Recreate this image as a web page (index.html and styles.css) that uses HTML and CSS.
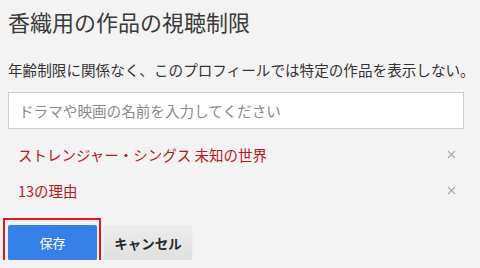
FILE: index.html
```html
<!DOCTYPE html>
<html lang="ja">
<head>
  <meta charset="UTF-8" />
  <meta name="viewport" content="width=device-width, initial-scale=1.0"/>
  <title>視聴制限</title>
  <link rel="stylesheet" href="styles.css">
</head>
<body>
  <div class="page">
    <h1 class="title">香織用の作品の視聴制限</h1>
    <p class="desc">年齢制限に関係なく、このプロフィールでは特定の作品を表示しない。</p>
    <input class="search" type="text" placeholder="ドラマや映画の名前を入力してください" />

    <ul class="blocked">
      <li>
        <span>ストレンジャー・シングス 未知の世界</span>
        <button class="remove" aria-label="削除">
          <svg width="9" height="9" viewBox="0 0 9 9"><path d="M1 1L8 8M8 1L1 8" stroke="#a8a8a8" stroke-width="1.1"/></svg>
        </button>
      </li>
      <li>
        <span>13の理由</span>
        <button class="remove" aria-label="削除">
          <svg width="9" height="9" viewBox="0 0 9 9"><path d="M1 1L8 8M8 1L1 8" stroke="#a8a8a8" stroke-width="1.1"/></svg>
        </button>
      </li>
    </ul>

    <div class="actions">
      <div class="save-wrap">
        <button class="btn btn-save">保存</button>
        <span class="highlight"></span>
      </div>
      <button class="btn btn-cancel">キャンセル</button>
    </div>
  </div>
</body>
</html>
```

FILE: styles.css
```css
body {
  margin: 0;
  background: #f3f3f3;
  font-family: "Noto Sans CJK JP", "Noto Sans", sans-serif;
  color: #333;
  overflow: hidden;
}

.page {
  padding: 8px 16px 0 8px;
}

.title {
  margin: 0;
  font-size: 22px;
  line-height: 26px;
  font-weight: normal;
  color: #3a3a3a;
}

.desc {
  margin: 26px 0 0;
  font-size: 14.6px;
  line-height: 20px;
  color: #333;
  white-space: nowrap;
}

.search {
  display: block;
  box-sizing: border-box;
  margin-top: 12px;
  width: 456px;
  height: 37px;
  padding: 0 10px;
  border: 1px solid #cfcfcf;
  background: #fff;
  font-family: inherit;
  font-size: 14.6px;
  color: #333;
  outline: none;
}

.search::placeholder {
  color: #8a8a8a;
}

.blocked {
  list-style: none;
  margin: 7px 0 0;
  padding: 0;
  width: 456px;
}

.blocked li {
  display: flex;
  align-items: center;
  justify-content: space-between;
  height: 36px;
  padding: 0 8px 0 10px;
  font-size: 14.5px;
  color: #b8191c;
}

.remove {
  border: none;
  background: none;
  padding: 0;
  display: flex;
  cursor: pointer;
}

.actions {
  display: flex;
  gap: 7px;
  margin-top: 17px;
}

.save-wrap {
  position: relative;
}

.btn {
  height: 35px;
  border: none;
  border-radius: 2px;
  font-family: inherit;
  font-size: 13px;
  cursor: pointer;
}

.btn-save {
  width: 89px;
  background: #3580e6;
  color: #fff;
  box-shadow: 0 1px 1px rgba(0,0,0,0.25);
}

.btn-cancel {
  width: 88px;
  background: linear-gradient(#ececec, #e0e0e0);
  color: #2a2a2a;
  font-size: 13.5px;
  font-weight: bold;
  box-shadow: 0 1px 1px rgba(0,0,0,0.2);
}

.highlight {
  position: absolute;
  left: -5px;
  top: -7px;
  right: -4px;
  bottom: -9px;
  border: 2px solid #e8161a;
  pointer-events: none;
}
```
